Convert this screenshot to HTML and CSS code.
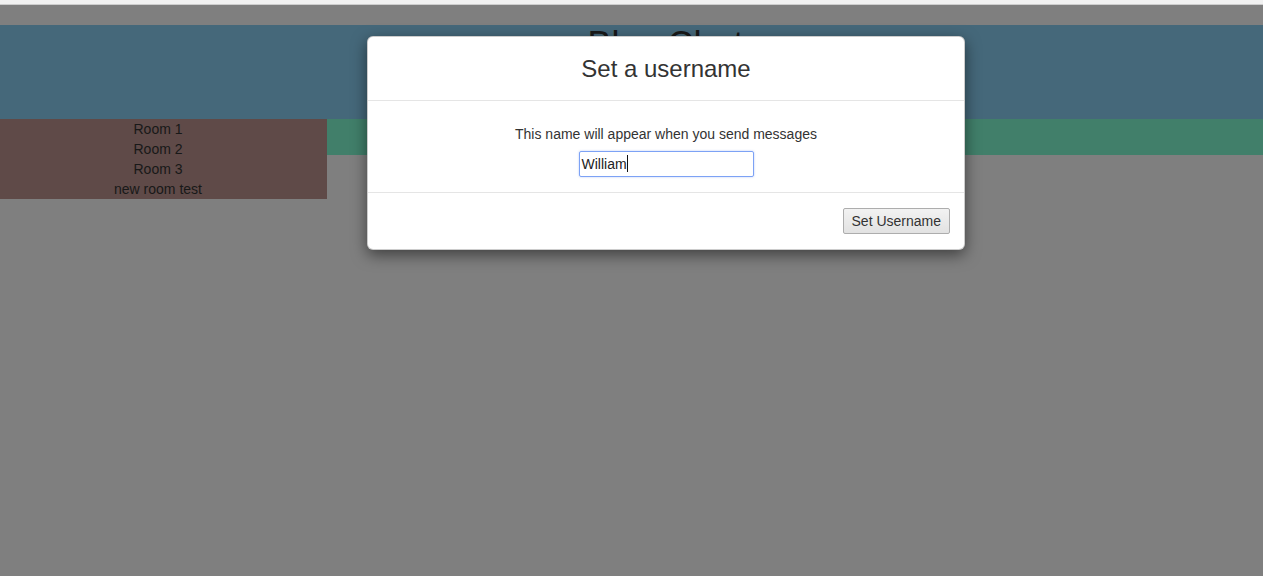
FILE: index.html
```html
<!DOCTYPE html>
<html>
<head>
<meta charset="utf-8">
<title>Bloc Chat</title>
<link rel="stylesheet" href="styles.css">
</head>
<body>
<div class="chrome"></div>
<div class="page">
  <div class="spacer"></div>
  <header class="banner"><h1 class="title">Bloc Chat</h1></header>
  <div class="main">
    <ul class="rooms">
      <li>Room 1</li>
      <li>Room 2</li>
      <li>Room 3</li>
      <li>new room test</li>
    </ul>
    <div class="content"><div class="room-bar"></div></div>
  </div>
  <div class="backdrop"></div>
  <div class="modal">
    <div class="modal-header"><h4 class="modal-title">Set a username</h4></div>
    <div class="modal-body">
      <p class="hint">This name will appear when you send messages</p>
      <div class="field">William<span class="caret"></span></div>
    </div>
    <div class="modal-footer"><button class="btn">Set Username</button></div>
  </div>
</div>
</body>
</html>
```

FILE: styles.css
```css
* { box-sizing: border-box; }
html, body { margin: 0; padding: 0; height: 100%; }
body {
  font-family: "Liberation Sans", Arial, sans-serif;
  font-size: 14px;
  color: #333;
  background: #fff;
  overflow: hidden;
}
.chrome {
  height: 5px;
  background: #f1f1f1;
  border-bottom: 1px solid #cdcdcd;
}
.page {
  position: relative;
  height: calc(100% - 5px);
}
.spacer { height: 20px; }
.banner {
  height: 94px;
  background: #8bd1f5;
  text-align: center;
  padding-left: 68px;
}
.title {
  margin: 0;
  font-size: 36px;
  font-weight: 500;
  line-height: 1.1;
}
.main { display: flex; align-items: flex-start; }
.rooms {
  list-style: none;
  margin: 0;
  padding: 0 11px 0 0;
  width: 327px;
  background: #be9590;
  text-align: center;
}
.rooms li { line-height: 20px; }
.content { flex: 1; }
.room-bar { height: 36px; background: #82ffd4; }
.backdrop {
  position: absolute;
  inset: 0;
  background: rgba(0,0,0,0.5);
}
.modal {
  position: absolute;
  top: 31px;
  left: 367px;
  width: 598px;
  background: #fff;
  border: 1px solid rgba(0,0,0,0.2);
  border-radius: 6px;
  box-shadow: 0 5px 15px rgba(0,0,0,0.5);
  text-align: center;
}
.modal-header {
  height: 64px;
  border-bottom: 1px solid #e5e5e5;
  display: flex;
  align-items: center;
  justify-content: center;
}
.modal-title {
  margin: 0;
  font-size: 24px;
  font-weight: 500;
  line-height: 1.1;
  padding-top: 1px;
}
.modal-body {
  height: 92px;
  padding-top: 23px;
  border-bottom: 1px solid #e5e5e5;
}
.hint { margin: 0 0 7px; line-height: 20px; }
.field {
  display: inline-block;
  width: 175px;
  height: 26px;
  border: 1px solid #7da2f5;
  border-radius: 2px;
  box-shadow: 0 0 2px rgba(100,140,240,0.5);
  text-align: left;
  padding: 2px 2px;
  line-height: 20px;
  color: #222;
}
.caret {
  display: inline-block;
  width: 1px;
  height: 17px;
  background: #111;
  vertical-align: -3px;
}
.modal-footer {
  height: 56px;
  padding: 15px 14px 0 0;
  text-align: right;
}
.btn {
  font-family: "Liberation Sans", Arial, sans-serif;
  font-size: 14px;
  color: #333;
  height: 26px;
  padding: 0 8px;
  border: 1px solid #adadad;
  border-radius: 2px;
  background: linear-gradient(#f2f2f2, #e2e2e2);
}
```
